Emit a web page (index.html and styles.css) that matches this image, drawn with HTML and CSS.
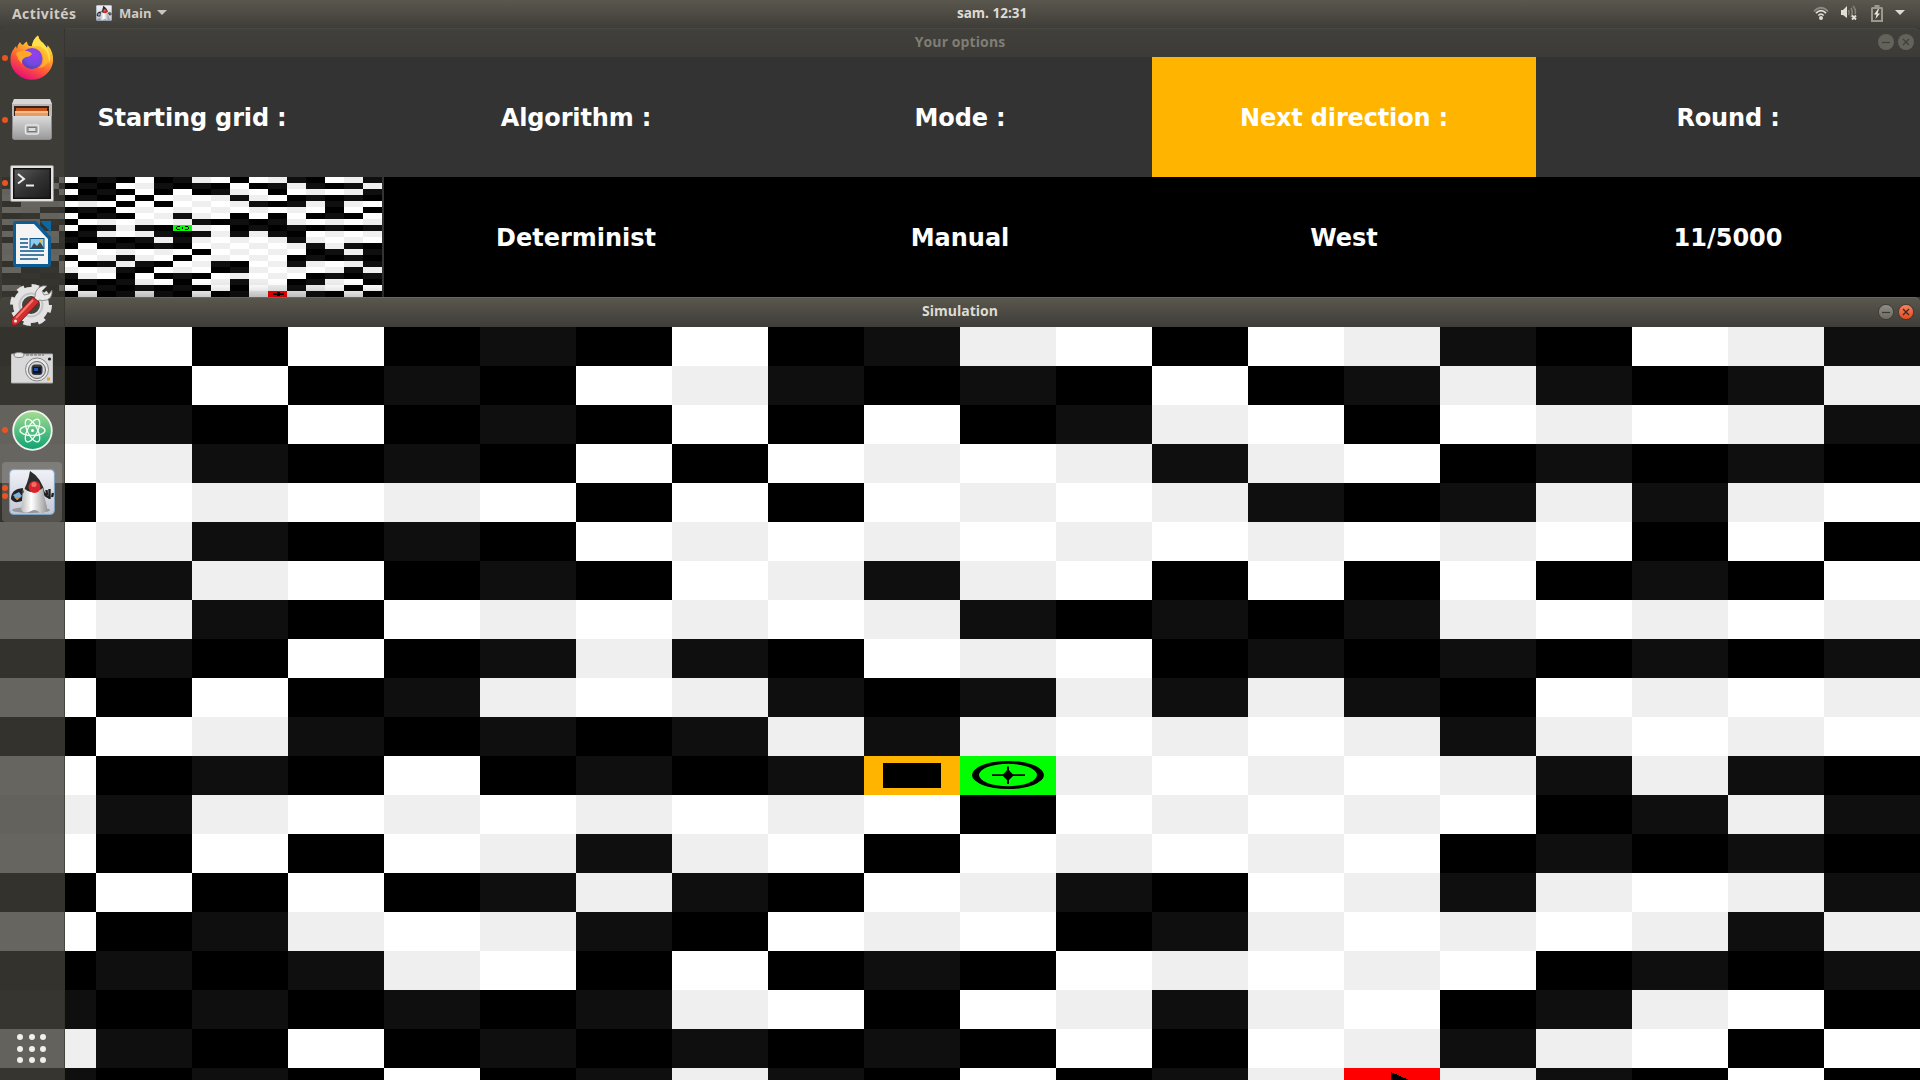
FILE: index.html
```html
<!DOCTYPE html>
<html lang="fr">
<head>
<meta charset="utf-8">
<title>Simulation</title>
<link rel="stylesheet" href="styles.css">
</head>
<body>
<svg width="0" height="0" class="defs">
  <defs>
    <linearGradient id="ffBody" x1="0.8" y1="0" x2="0.3" y2="1"><stop offset="0" stop-color="#fff44f"/><stop offset=".35" stop-color="#ffb02a"/><stop offset=".65" stop-color="#ff5a36"/><stop offset="1" stop-color="#e5097b"/></linearGradient>
    <radialGradient id="ffGlobe" cx=".6" cy=".3" r=".8"><stop offset="0" stop-color="#9a3df0"/><stop offset=".6" stop-color="#6f4be0"/><stop offset="1" stop-color="#4a3aa8"/></radialGradient>
    <linearGradient id="metal" x1="0" y1="0" x2="0" y2="1"><stop offset="0" stop-color="#dcdcdc"/><stop offset="1" stop-color="#9a9a9a"/></linearGradient>
    <linearGradient id="term" x1="0" y1="0" x2="1" y2="1"><stop offset="0" stop-color="#5a5a5a"/><stop offset=".5" stop-color="#333"/><stop offset="1" stop-color="#1c1c1c"/></linearGradient>
    <linearGradient id="atomBg" x1="0" y1="0" x2="0" y2="1"><stop offset="0" stop-color="#a6dc92"/><stop offset="1" stop-color="#0da271"/></linearGradient>
    <linearGradient id="tile" x1="0" y1="0" x2="0" y2="1"><stop offset="0" stop-color="#f1f2f8"/><stop offset="1" stop-color="#c3c6d4"/></linearGradient>
    <linearGradient id="dukeBody" x1="0" y1="0" x2="1" y2="0"><stop offset="0" stop-color="#bbb"/><stop offset=".4" stop-color="#fff"/><stop offset="1" stop-color="#999"/></linearGradient>
    <linearGradient id="grayBtn" x1="0" y1="0" x2="0" y2="1"><stop offset="0" stop-color="#918e85"/><stop offset="1" stop-color="#6b6960"/></linearGradient>
    <linearGradient id="closeBtn" x1="0" y1="0" x2="0" y2="1"><stop offset="0" stop-color="#f68461"/><stop offset="1" stop-color="#e2491b"/></linearGradient>
    <symbol id="duke" viewBox="0 0 46 46">
      <rect x=".6" y=".6" width="44.8" height="44.8" rx="4" fill="url(#tile)" stroke="#7fa6c9"/>
      <ellipse cx="22" cy="41" rx="19" ry="3" fill="#777" opacity=".6"/>
      <path d="M14 19Q2 20 2 30Q5 35 13 32Z" fill="#222"/>
      <path d="M4 26l6-3 3 4-5 4z" fill="#7fb0e0"/><path d="M5 28l7 0-4 3z" fill="#d89040"/>
      <path d="M34 23Q38 29 41 28M40.500 30V20M38 26L37.500 21M43 28L44 24" stroke="#222" stroke-width="2.400" fill="none"/>
      <path d="M21 2Q33 9 36 25L13 24Q19 15 21 2Z" fill="#2c2c2c"/>
      <path d="M15 19Q22 27 34 19Q35 28 38 38Q38 45 31 44L29 42Q25 40 22 42Q14 46 12 40Q14 30 15 19Z" fill="url(#dukeBody)"/>
      <circle cx="25.500" cy="18" r="6" fill="#d9232b"/><circle cx="25" cy="15.500" r="2.600" fill="#f46a65"/>
    </symbol>
    <symbol id="compass" viewBox="0 0 96 39">
      <path fill-rule="evenodd" d="M12 19a36 14 0 1 0 72 0a36 14 0 1 0-72 0M19 19a29 11.200 0 1 1 58 0a29 11.200 0 1 1-58 0"/>
      <path d="M32 18.300H43L45 16.500L47 14V10.500H49V14L51 16.500L53 18.300H65V19.900H53L51 22L49 24V28H47V24L45 22L43 19.900H32Z"/>
    </symbol>
  </defs>
</svg>

<div class="desktop">
  <header class="panel">
    <div class="panel-left">
      <span class="activities">Activités</span>
      <svg class="app-icon" width="16" height="16"><use href="#duke" width="16" height="16"/></svg>
      <span class="app-name">Main</span>
      <svg width="10" height="6" viewBox="0 0 10 6"><path d="M0 0H10L5 5Z" fill="#c9c6be"/></svg>
    </div>
    <span class="clock">sam. 12:31</span>
    <div class="panel-right">
      <svg class="wifi" width="16" height="16" viewBox="0 0 16 16" fill="none">
        <path d="M1 6.500Q8 -1 15 6.500" stroke="#8c8981" stroke-width="1.800"/>
        <path d="M3 8.200Q8 3 13 8.200M5.300 10.500Q8 7.800 10.700 10.500" stroke="#e0ddd5" stroke-width="1.700"/>
        <circle cx="8" cy="13" r="2" fill="#e0ddd5"/>
      </svg>
      <svg class="sound" width="18" height="16" viewBox="0 0 18 16" fill="none">
        <path d="M1 5H3L7 1V13L3 10H1Z" fill="#e0ddd5"/>
        <path d="M8.500 5Q10 7.500 8.500 10M11 3Q13.500 7 11 12M13 1Q16.500 5 15 9" stroke="#85827a" stroke-width="1.600"/>
        <path d="M12 10.500L16 14.500M16 10.500L12 14.500" stroke="#e0ddd5" stroke-width="1.900"/>
      </svg>
      <svg class="battery" width="12" height="17" viewBox="0 0 12 17">
        <path d="M3.500 0H8.500V2H11L12 3V17H0V3L1 2H3.500ZM2 4V15H10V4Z" fill="#9b9890" fill-rule="evenodd"/>
        <path d="M7 4L3 9.500H5.500L4.500 14L9 8.500H6.500L8 4Z" fill="#e8e5dd"/>
      </svg>
      <svg class="menu-arrow" width="10" height="6" viewBox="0 0 10 6"><path d="M0 0H10L5 5Z" fill="#dedbd3"/></svg>
    </div>
  </header>

  <section class="window options">
    <div class="titlebar inactive">
      <span class="title t-options">Your options</span>
      <div class="buttons">
        <svg width="16" height="16"><circle cx="8" cy="8" r="8" fill="#64625b"/><path d="M4 8.500H12" stroke="#403f3a" stroke-width="1.200"/></svg>
        <svg width="16" height="16"><circle cx="8" cy="8" r="8" fill="#64625b"/><path d="M5 5L11 11M11 5L5 11" stroke="#403f3a" stroke-width="1.200"/></svg>
      </div>
    </div>
    <div class="table">
      <div class="head">Starting grid :</div><div class="head">Algorithm :</div><div class="head">Mode :</div><div class="head selected">Next direction :</div><div class="head">Round :</div>
      <div class="preview"><div class="board mini" id="preview"></div></div><div class="value">Determinist</div><div class="value">Manual</div><div class="value">West</div><div class="value">11/5000</div>
    </div>
  </section>

  <section class="window simulation">
    <div class="titlebar">
      <span class="title t-simulation">Simulation</span>
      <div class="buttons">
        <svg width="16" height="16"><circle cx="8" cy="8" r="7.600" fill="url(#grayBtn)" stroke="#33322e" stroke-width=".8"/><path d="M4 8.500H12" stroke="#3a3934" stroke-width="1.200"/></svg>
        <svg width="16" height="16"><circle cx="8" cy="8" r="7.600" fill="url(#closeBtn)" stroke="#33322e" stroke-width=".8"/><path d="M5 5L11 11M11 5L5 11" stroke="#3a2a20" stroke-width="1.300"/></svg>
      </div>
    </div>
    <div class="board main" id="board"></div>
  </section>

  <nav class="dock">
    <div class="slot s-firefox"><i class="dot"></i>
      <svg width="44" height="46" viewBox="0 0 44 46">
        <path d="M7 14Q7 10 10 7Q11 10 13 10Q15 7 17 6.500Q17 10 19 11L22 11Q23 4 28 .5Q29 5 33 8Q36 11 36.500 13Q38 11 37.500 10Q44 17 43 27A21.500 21 0 0 1 .5 27Q0 19 3 15Q5 12 6 11Z" fill="url(#ffBody)"/>
        <path d="M22 11Q23 4 28 .5Q29 5 33 8Q43 18 39 29Q39 20 31 14Q27 11 22 11Z" fill="#ffe14a"/>
        <circle cx="22" cy="23.500" r="10.500" fill="url(#ffGlobe)"/>
        <path d="M6 19Q6 16 12 16Q19 15 22 19Q20 22 16 22Q11 24 12 29Q8 25 6 19Z" fill="#ffa626"/>
        <path d="M25 11.500Q32 13 33.500 21Q34 30 28 33Q37 32 39 25Q38 15 31 12Q28 10.500 25 11.500Z" fill="#ffb92e" opacity=".8"/>
      </svg></div>
    <div class="slot s-files"><i class="dot"></i>
      <svg width="42" height="42" viewBox="0 0 42 42">
        <path d="M3 0H39L41 5V38Q41 41 38 41H4Q1 41 1 38V5Z" fill="#8d8d8d"/><path d="M3 0H39L41 5H1Z" fill="#d8d5d8"/><path d="M1 5H41V17H1Z" fill="#b8b8b8"/>
        <path d="M3 7H38V18H3Z" fill="#3b2116"/><path d="M5 9H36V18H5Z" fill="#c8541d"/><path d="M4 12H37V18H4Z" fill="#ee9a58"/><path d="M4 13H37" stroke="#ffdfc3"/>
        <path d="M2 17H40V40H2Z" fill="url(#metal)"/>
        <rect x="14.500" y="26" width="13" height="9" rx="2" fill="#aaa" stroke="#e6e6e6" stroke-width="1.500"/><rect x="17" y="28.500" width="8" height="4" fill="#ddd" stroke="#777"/>
      </svg></div>
    <div class="slot s-terminal"><i class="dot"></i>
      <svg width="44" height="37" viewBox="0 0 44 37">
        <rect x=".5" y=".5" width="43" height="36" rx="1.500" fill="#e2e2e0" stroke="#8f8f8d"/><rect x="3" y="3" width="38" height="31" fill="#111"/><rect x="4.500" y="4.500" width="35" height="28" fill="url(#term)"/>
        <path d="M8 9L14 14L8 18.500" fill="none" stroke="#eee" stroke-width="2"/><path d="M16 20.500H24" stroke="#eee" stroke-width="2"/>
      </svg></div>
    <div class="slot s-writer">
      <svg width="40" height="47" viewBox="0 0 40 47">
        <path d="M4 0H24L39 16V43Q39 46 36 46H4Q1 46 1 43V3Q1 0 4 0Z" fill="#0d5c93"/><path d="M28 0H39V12Z" fill="#0a68a5"/>
        <path d="M4 3H22L36 18V43H4Z" fill="#f4f4f4"/>
        <path d="M8 18H16M8 22H16M8 26H16M8 30H32M8 34H32M8 38H26" stroke="#0b568b" stroke-width="1.700"/>
        <rect x="18" y="17.500" width="14" height="10" fill="#8cc9ee" stroke="#0b568b"/><path d="M19 27L22 22L25 25L28 21L32 27Z" fill="#444"/><circle cx="29" cy="20" r="1.500" fill="#f0c030"/>
      </svg></div>
    <div class="slot s-settings">
      <svg width="44" height="44" viewBox="0 0 44 44">
        <circle cx="21" cy="22" r="13.500" fill="none" stroke="#e3e3e3" stroke-width="9"/>
        <circle cx="21" cy="22" r="18.500" fill="none" stroke="#e3e3e3" stroke-width="5" stroke-dasharray="7.250 7.280"/>
        <circle cx="21" cy="22" r="11.500" fill="none" stroke="#c4c4c4" stroke-width="2"/>
        <path d="M25 14Q25 7 30 4Q33 2 37 3L32 8L34 12L39 11L42 7Q43 14 37 17Q32 18 29 17L25 21L21 18Z" fill="#e9e9e9" stroke="#777" stroke-width=".8"/>
        <path d="M23 14L29 19L9 40Q5 44 2 41Q0 38 3 35Z" fill="#d32f2f" stroke="#8f1515"/><path d="M23 17L6 35" stroke="#f37a72" stroke-width="2"/><circle cx="5.500" cy="38" r="1.500" fill="#eee"/>
      </svg></div>
    <div class="slot s-camera">
      <svg width="42" height="32" viewBox="0 0 42 32">
        <rect x="0" y="2" width="42" height="29" rx="1" fill="#d9d9d9" stroke="#aaa"/><ellipse cx="8" cy="3" rx="5" ry="2.500" fill="#e8e8e8" stroke="#888"/><path d="M15 3H33" stroke="#666" stroke-dasharray="3 1"/>
        <circle cx="26" cy="17.500" r="11.500" fill="#e7e7e7" stroke="#858585"/><circle cx="26" cy="18" r="8.500" fill="#d5d5d5" stroke="#666"/><rect x="20.500" y="12.500" width="11" height="10.500" rx="3.500" fill="#35383c"/><rect x="22" y="15" width="8" height="6.500" fill="#0b1230"/><rect x="23" y="16" width="4" height="3" fill="#2454a8"/>
        <circle cx="38.500" cy="7" r="1.600" fill="#222"/><rect x="36" y="25.500" width="3" height="3" fill="#f0a020"/>
      </svg></div>
    <div class="slot s-atom"><i class="dot"></i>
      <svg width="41" height="41" viewBox="0 0 41 41">
        <circle cx="20.500" cy="20.500" r="19.300" fill="url(#atomBg)" stroke="#f0f3ee" stroke-width="1.800"/>
        <g fill="none" stroke="#f2fff5" stroke-width="1.300"><ellipse cx="20.500" cy="20.500" rx="12.500" ry="5"/><ellipse cx="20.500" cy="20.500" rx="12.500" ry="5" transform="rotate(63 20.500 20.500)"/><ellipse cx="20.500" cy="20.500" rx="12.500" ry="5" transform="rotate(117 20.500 20.500)"/></g><circle cx="20.500" cy="20.500" r="1.500" fill="#fff"/>
      </svg></div>
    <div class="slot s-java"><span class="dots"><i class="dot"></i><i class="dot"></i></span>
      <svg width="46" height="46"><use href="#duke" width="46" height="46"/></svg></div>
    <div class="apps"><i></i><i></i><i></i><i></i><i></i><i></i><i></i><i></i><i></i></div>
  </nav>
</div>
<script src="board.js"></script>
</body>
</html>
```
FILE: styles.css
```css
* { box-sizing: border-box; }
body { margin: 0; overflow: hidden; background: #000; font-family: "Open Sans", "Noto Sans", sans-serif; }
.defs { position: absolute; }
svg { display: block; flex: none; }
.desktop { position: relative; width: 1920px; height: 1080px; overflow: hidden; display: flex; flex-direction: column; background: #3d3b36; }

.panel { flex: none; height: 28px; display: grid; grid-template-columns: 957px auto 1fr; align-items: center; padding-bottom: 2px; background: linear-gradient(#5a574e, #3f3d38); color: #dfdbd2; font-size: 13.500px; font-weight: 700; }
.panel-left, .panel-right { display: flex; align-items: center; }
.panel-left { padding-left: 12px; }
.activities { width: 64px; margin-right: 20px; color: #cfccc4; font-size: 14px; letter-spacing: .4px; }
.app-icon { margin-right: 7px; }
.app-name { width: 32px; margin-right: 6px; color: #cfccc4; font-size: 13px; }
.clock { white-space: nowrap; }
.panel-right { justify-content: flex-end; padding-right: 15px; }
.sound { margin-left: 11px; }
.battery { margin-left: 13px; }
.menu-arrow { margin-left: 12px; }

.titlebar { height: 30px; display: grid; grid-template-columns: 1fr auto 1fr; align-items: center; background: linear-gradient(#5a574e, #3e3d38); border-radius: 6px 6px 0 0; color: #dfdbd2; box-shadow: inset 0 1px #68665d; }
.titlebar.inactive { height: 29px; background: linear-gradient(#41403b, #3c3b37); color: #807d75; box-shadow: inset 0 1px #484742; }
.title { grid-column: 2; padding-bottom: 2px; font-size: 14px; font-weight: 700; line-height: 18px; white-space: nowrap; }
.t-options { letter-spacing: .1px; }
.buttons { display: flex; gap: 4px; justify-content: flex-end; padding-right: 6px; }
.inactive .buttons { padding-bottom: 1px; }

.table { display: grid; grid-template-columns: repeat(5, 384px); grid-template-rows: 120px 120px; }
.head, .value { display: flex; align-items: center; justify-content: center; padding-top: 2px; color: #fff; font: bold 24px "DejaVu Sans", sans-serif; }
.head { background: #333; letter-spacing: -.16px; }
.head.selected { background: #ffb400; }
.value { background: #000; }
.preview { background: #333; padding: 0 2px; }
.options { position: relative; }
.simulation { position: relative; box-shadow: 0 -2px 14px rgba(0, 0, 0, .35); }

.board { display: grid; }
.board.main { grid-template-columns: repeat(20, 96px); grid-auto-rows: 39px; }
.board.mini { grid-template-columns: repeat(20, 19px); grid-auto-rows: 6px; }
.cell svg { width: 100%; height: 100%; }
.wall { background: #000; }
.wall.odd { background: #0f0f0f; }
.free { background: #efefef; }
.free.odd { background: #fff; }
.cell.trail { background: #ffb400; }
.cell.robot { background: #0f0; }
.cell.exit { background: #f00; }

.dock { position: absolute; left: 0; top: 28px; width: 65px; height: 1052px; background: rgba(64, 62, 56, .8); border-right: 1px solid rgba(50, 49, 44, .6); display: flex; flex-direction: column; }
.slot { flex: none; width: 60px; margin-left: 2px; height: 62px; display: flex; align-items: center; justify-content: center; position: relative; }
.s-firefox { height: 60px; }
.s-files { height: 64px; }
.s-terminal { height: 62px; }
.s-writer { height: 60px; }
.s-settings { height: 62px; }
.s-camera { height: 64px; }
.s-atom { height: 60px; }
.s-java { height: 60px; margin-top: 2px; border-radius: 4px; background: rgba(255, 255, 255, .16); }
.dot { display: block; width: 6px; height: 6px; border-radius: 50%; background: #e95420; }
.slot > .dot, .dots { position: absolute; left: 0; top: calc(50% - 3px); }
.dots { top: 23px; display: grid; gap: 2px; }
.apps { margin: auto 0 17px 17px; display: grid; grid-template-columns: repeat(3, 6px); gap: 5.500px; }
.apps i { width: 6px; height: 6px; border-radius: 50%; background: #f0f0ec; }
```
FILE: board.js
```js
const rows = [
  "01010001001101100110",
  "00100011000010010001",
  "10010001010011011110",
  "11000010111101100000",
  "01111101011110001011",
  "11000011111111111010",
  "00110001101101010001",
  "11001111110000011111",
  "00010010011100000000",
  "10100111000101001111",
  "01100000101111101111",
  "10001000001111110100",
  "10111111110111110010",
  "10101101101111100000",
  "01010010011001101110",
  "10011100111001111101",
  "00001101000111110000",
  "00000001101101100110",
  "10010000000101101101",
  "00001001001001110010"
];

function draw(id, special) {
  const board = document.getElementById(id);
  rows.forEach((row, r) => [...row].forEach((bit, c) => {
    const cell = document.createElement("div");
    cell.className = "cell " + (bit === "1" ? "free" : "wall") + ((r + c) % 2 ? " odd" : "");
    const s = special[r + "," + c];
    if (s) {
      cell.classList.add(s[0]);
      cell.innerHTML = s[1];
    }
    board.appendChild(cell);
  }));
}

draw("board", {
  "11,9": ["trail", '<svg viewBox="0 0 96 39" shape-rendering="crispEdges"><rect x="19" y="7" width="58" height="25"/></svg>'],
  "11,10": ["robot", '<svg viewBox="0 0 96 39"><use href="#compass"/></svg>'],
  "19,14": ["exit", '<svg viewBox="0 0 96 39" shape-rendering="crispEdges"><path d="M47 4L82 19.500L47 35Z"/></svg>']
});

draw("preview", {
  "8,9": ["robot", '<svg viewBox="0 0 19 6" shape-rendering="crispEdges"><path d="M4 1h3v1h-3zM3 2h1v2h-1zM4 4h3v1h-3zM9 2h1v2h-1zM12 1h3v1h-3zM15 2h1v2h-1zM12 4h3v1h-3z"/></svg>'],
  "19,14": ["exit", '<svg viewBox="0 0 19 6" shape-rendering="crispEdges"><path d="M5 2h4v-1h3v1h4v2h-4v1h-3v-1h-4z"/></svg>']
});
```
